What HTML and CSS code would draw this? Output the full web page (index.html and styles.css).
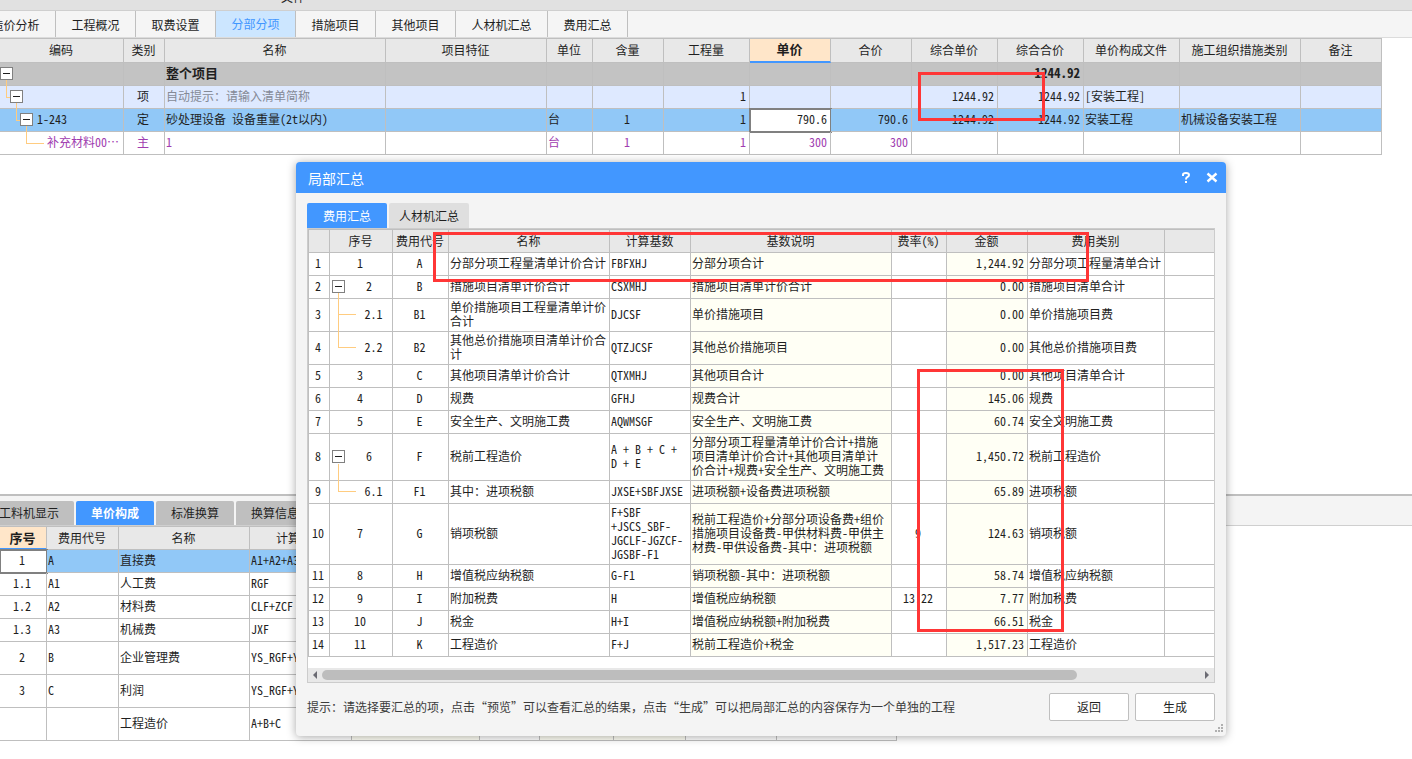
FILE: index.html
```html
<!DOCTYPE html>
<html lang="zh-CN">
<head>
<meta charset="utf-8">
<title>分部分项</title>
<link rel="stylesheet" href="styles.css">
</head>
<body>
<div class="app">
  <header class="menu-strip"><span>文件</span></header>
  <nav class="main-tabs">
    <button>造价分析</button><button>工程概况</button><button>取费设置</button><button class="active">分部分项</button><button>措施项目</button><button>其他项目</button><button class="wide">人材机汇总</button><button>费用汇总</button>
  </nav>
  <main class="upper">
    <table class="grid bill">
      <colgroup><col class="w124"><col class="w41"><col class="w221"><col class="w161"><col class="w46"><col class="w71"><col class="w86"><col class="w81"><col class="w81"><col class="w86"><col class="w86"><col class="w96"><col class="w121"><col class="w81"></colgroup>
      <thead>
        <tr><th>编码</th><th>类别</th><th>名称</th><th>项目特征</th><th>单位</th><th>含量</th><th>工程量</th><th class="current">单价</th><th>合价</th><th>综合单价</th><th>综合合价</th><th>单价构成文件</th><th>施工组织措施类别</th><th>备注</th></tr>
      </thead>
      <tbody>
        <tr class="total"><td class="tree lv0"><button class="toggle" aria-label="折叠"></button></td><td></td><td>整个项目</td><td></td><td></td><td></td><td></td><td></td><td></td><td></td><td class="r">1244.92</td><td></td><td></td><td></td></tr>
        <tr class="item"><td class="tree lv1"><button class="toggle" aria-label="折叠"></button></td><td class="c">项</td><td class="hint">自动提示：请输入清单简称</td><td></td><td></td><td></td><td class="r">1</td><td></td><td></td><td class="r">1244.92</td><td class="r">1244.92</td><td>[安装工程]</td><td></td><td></td></tr>
        <tr class="selected"><td class="tree lv2"><button class="toggle" aria-label="折叠"></button>1-243</td><td class="c">定</td><td>砂处理设备 设备重量(2t以内)</td><td></td><td>台</td><td class="c">1</td><td class="r">1</td><td class="r focus">790.6</td><td class="r">790.6</td><td class="r">1244.92</td><td class="r">1244.92</td><td>安装工程</td><td>机械设备安装工程</td><td></td></tr>
        <tr class="material"><td class="tree lv3">补充材料00…</td><td class="c">主</td><td>1</td><td></td><td>台</td><td class="c">1</td><td class="r">1</td><td class="r">300</td><td class="r">300</td><td></td><td></td><td></td><td></td><td></td></tr>
      </tbody>
    </table>
  </main>
  <section class="lower">
    <nav class="sub-tabs"><button class="wide">工料机显示</button><button class="active">单价构成</button><button>标准换算</button><button>换算信息</button></nav>
    <table class="grid price">
      <colgroup><col class="w47"><col class="w72"><col class="w131"><col class="w102"><col class="w128"><col class="w60"><col class="w74"><col class="w72"><col class="w91"><col class="w120"></colgroup>
      <thead><tr><th class="current">序号</th><th>费用代号</th><th>名称</th><th>计算基数</th><th></th><th></th><th></th><th></th><th></th><th></th></tr></thead>
      <tbody>
        <tr class="selected"><td class="c focus">1</td><td>A</td><td>直接费</td><td>A1+A2+A3</td><td></td><td></td><td></td><td></td><td></td><td></td></tr>
        <tr><td class="c">1.1</td><td>A1</td><td>人工费</td><td>RGF</td><td class="ro"></td><td></td><td class="ro"></td><td class="ro"></td><td></td><td></td></tr>
        <tr><td class="c">1.2</td><td>A2</td><td>材料费</td><td>CLF+ZCF</td><td class="ro"></td><td></td><td class="ro"></td><td class="ro"></td><td></td><td></td></tr>
        <tr><td class="c">1.3</td><td>A3</td><td>机械费</td><td>JXF</td><td class="ro"></td><td></td><td class="ro"></td><td class="ro"></td><td></td><td></td></tr>
        <tr class="tall"><td class="c">2</td><td>B</td><td>企业管理费</td><td>YS_RGF+Y</td><td class="ro"></td><td></td><td class="ro"></td><td class="ro"></td><td></td><td></td></tr>
        <tr class="tall"><td class="c">3</td><td>C</td><td>利润</td><td>YS_RGF+Y</td><td class="ro"></td><td></td><td class="ro"></td><td class="ro"></td><td></td><td></td></tr>
        <tr class="tall"><td></td><td></td><td>工程造价</td><td>A+B+C</td><td class="ro"></td><td></td><td class="ro"></td><td class="ro"></td><td></td><td></td></tr>
      </tbody>
    </table>
  </section>
</div>

<div class="dialog" role="dialog" aria-labelledby="dialog-title">
  <div class="title-bar">
    <h1 id="dialog-title">局部汇总</h1>
    <button aria-label="帮助"><svg width="12" height="12" viewBox="0 0 12 12"><path d="M3 4V2.8Q3 1 6 1Q9 1 9 3Q9 4.3 7.2 5.2Q6 5.8 6 7.4" fill="none" stroke="#fff" stroke-width="2"/><rect x="5" y="9" width="2" height="2" fill="#fff"/></svg></button>
    <button aria-label="关闭"><svg width="12" height="12" viewBox="0 0 12 12"><path d="M1.5 1.5L10.5 9.5M10.5 1.5L1.5 9.5" stroke="#fff" stroke-width="2.4"/></svg></button>
  </div>
  <div class="dialog-body">
    <nav class="dialog-tabs"><button class="active">费用汇总</button><button>人材机汇总</button></nav>
    <div class="frame">
      <table class="grid fees">
        <colgroup><col class="w22"><col class="w63"><col class="w56"><col class="w161"><col class="w81"><col class="w201"><col class="w55"><col class="w81"><col class="w137"><col></colgroup>
        <thead><tr><th></th><th>序号</th><th>费用代号</th><th>名称</th><th>计算基数</th><th>基数说明</th><th>费率(%)</th><th>金额</th><th>费用类别</th><th></th></tr></thead>
        <tbody>
          <tr><td class="c">1</td><td class="c">1</td><td class="c">A</td><td>分部分项工程量清单计价合计</td><td>FBFXHJ</td><td class="ro">分部分项合计</td><td class="c"></td><td class="r ro">1,244.92</td><td>分部分项工程量清单合计</td><td></td></tr>
          <tr><td class="c">2</td><td class="c parent"><button class="toggle" aria-label="折叠"></button>2</td><td class="c">B</td><td>措施项目清单计价合计</td><td>CSXMHJ</td><td class="ro">措施项目清单计价合计</td><td class="c"></td><td class="r ro">0.00</td><td>措施项目清单合计</td><td></td></tr>
          <tr><td class="c">3</td><td class="c child">2.1</td><td class="c">B1</td><td>单价措施项目工程量清单计价合计</td><td>DJCSF</td><td class="ro">单价措施项目</td><td class="c"></td><td class="r ro">0.00</td><td>单价措施项目费</td><td></td></tr>
          <tr><td class="c">4</td><td class="c child second">2.2</td><td class="c">B2</td><td>其他总价措施项目清单计价合计</td><td>QTZJCSF</td><td class="ro">其他总价措施项目</td><td class="c"></td><td class="r ro">0.00</td><td>其他总价措施项目费</td><td></td></tr>
          <tr><td class="c">5</td><td class="c">3</td><td class="c">C</td><td>其他项目清单计价合计</td><td>QTXMHJ</td><td class="ro">其他项目合计</td><td class="c"></td><td class="r ro">0.00</td><td>其他项目清单合计</td><td></td></tr>
          <tr><td class="c">6</td><td class="c">4</td><td class="c">D</td><td>规费</td><td>GFHJ</td><td class="ro">规费合计</td><td class="c"></td><td class="r ro">145.06</td><td>规费</td><td></td></tr>
          <tr><td class="c">7</td><td class="c">5</td><td class="c">E</td><td>安全生产、文明施工费</td><td>AQWMSGF</td><td class="ro">安全生产、文明施工费</td><td class="c"></td><td class="r ro">60.74</td><td>安全文明施工费</td><td></td></tr>
          <tr><td class="c">8</td><td class="c parent"><button class="toggle" aria-label="折叠"></button>6</td><td class="c">F</td><td>税前工程造价</td><td>A + B + C +<br>D + E</td><td class="ro">分部分项工程量清单计价合计+措施项目清单计价合计+其他项目清单计价合计+规费+安全生产、文明施工费</td><td class="c"></td><td class="r ro">1,450.72</td><td>税前工程造价</td><td></td></tr>
          <tr><td class="c">9</td><td class="c child second">6.1</td><td class="c">F1</td><td>其中：进项税额</td><td>JXSE+SBFJXSE</td><td class="ro">进项税额+设备费进项税额</td><td class="c"></td><td class="r ro">65.89</td><td>进项税额</td><td></td></tr>
          <tr><td class="c">10</td><td class="c">7</td><td class="c">G</td><td>销项税额</td><td>F+SBF<br>+JSCS_SBF-<br>JGCLF-JGZCF-<br>JGSBF-F1</td><td class="ro">税前工程造价+分部分项设备费+组价措施项目设备费-甲供材料费-甲供主材费-甲供设备费-其中：进项税额</td><td class="c">9</td><td class="r ro">124.63</td><td>销项税额</td><td></td></tr>
          <tr><td class="c">11</td><td class="c">8</td><td class="c">H</td><td>增值税应纳税额</td><td>G-F1</td><td class="ro">销项税额-其中：进项税额</td><td class="c"></td><td class="r ro">58.74</td><td>增值税应纳税额</td><td></td></tr>
          <tr><td class="c">12</td><td class="c">9</td><td class="c">I</td><td>附加税费</td><td>H</td><td class="ro">增值税应纳税额</td><td class="c">13.22</td><td class="r ro">7.77</td><td>附加税费</td><td></td></tr>
          <tr><td class="c">13</td><td class="c">10</td><td class="c">J</td><td>税金</td><td>H+I</td><td class="ro">增值税应纳税额+附加税费</td><td class="c"></td><td class="r ro">66.51</td><td>税金</td><td></td></tr>
          <tr><td class="c">14</td><td class="c">11</td><td class="c">K</td><td>工程造价</td><td>F+J</td><td class="ro">税前工程造价+税金</td><td class="c"></td><td class="r ro">1,517.23</td><td>工程造价</td><td></td></tr>
        </tbody>
      </table>
      <div class="scrollbar">
        <svg width="14" height="14" viewBox="0 0 14 14"><path d="M9 3V11L5 7Z" fill="#6b6b73"/></svg>
        <div class="track"><div class="thumb"></div></div>
        <svg width="14" height="14" viewBox="0 0 14 14"><path d="M5 3V11L9 7Z" fill="#6b6b73"/></svg>
      </div>
    </div>
    <footer class="dialog-footer">
      <p>提示：请选择要汇总的项，点击“预览”可以查看汇总的结果，点击“生成”可以把局部汇总的内容保存为一个单独的工程</p>
      <button>返回</button><button>生成</button>
    </footer>
  </div>
  <svg class="grip" width="8" height="8" viewBox="0 0 8 8"><path d="M6 0h2v2h-2zM3 3h2v2h-2zM6 3h2v2h-2zM0 6h2v2h-2zM3 6h2v2h-2zM6 6h2v2h-2z" fill="#b0b0b0"/></svg>
</div>
<div class="mark mark-price"></div>
<div class="mark mark-first"></div>
<div class="mark mark-amount"></div>
</body>
</html>
```

FILE: styles.css
```css
* { box-sizing: border-box; }

body {
  margin: 0;
  position: relative;
  overflow: hidden;
  background: #fff;
  color: #1f1f1f;
  font: 12px/14px "Noto Sans CJK SC", sans-serif;
}

button {
  margin: 0;
  padding: 0;
  border: 0;
  background: none;
  color: inherit;
  font: inherit;
}

.app {
  display: flex;
  flex-direction: column;
  min-height: 100vh;
}

/* Top strip and module tabs */
.menu-strip {
  height: 10px;
  overflow: hidden;
  background: #e1e1e1;
  padding-left: 281px;
}
.menu-strip span { display: block; margin-top: -10px; }

.main-tabs {
  display: flex;
  height: 28px;
  margin-left: -24px;
  border-top: 1px solid #cfcfcf;
  border-bottom: 1px solid #dcdcdc;
  background: #f5f5f5;
}
.main-tabs button {
  width: 80px;
  padding-top: 2px;
  border-right: 1px solid #bfbfbf;
}
.main-tabs .wide { width: 92px; }
.main-tabs .active { padding-top: 0; background: #cce6ff; color: #4297ff; }

/* Data grids */
.grid {
  table-layout: fixed;
  width: 0;
  border-spacing: 0;
  border-top: 1px solid #bfbfbf;
  font-feature-settings: "hwid";
}
.grid th, .grid td {
  position: relative;
  height: 23px;
  padding: 1px 3px 3px 1px;
  border-right: 1px solid #bfbfbf;
  border-bottom: 1px solid #bfbfbf;
  text-align: left;
  white-space: nowrap;
}
.grid th {
  padding: 0 1px 0 0;
  background: #e8e8e8;
  font-weight: 400;
  text-align: center;
}
.grid th.current {
  background: #ffe6c9;
  border-bottom: 2px solid #4297ff;
  font-size: 13px;
  font-weight: 700;
}
.grid .c { text-align: center; }
.grid .r { text-align: right; }
.grid .ro { background: #fffff5; }
.grid .tall td { height: 33px; }
.grid .selected td { background: #91c8f7; }
.grid .selected td.focus {
  background: #fff;
  outline: 2px solid #808080;
  outline-offset: -1px;
}
.grid.bill th { height: 24px; padding-bottom: 2px; }
.bill .total td { background: #c3c3c3; font-size: 13px; font-weight: 700; }
.bill .item td { background: #dee9ff; }
.bill .item .hint { color: #858a96; }
.bill .material td { color: #a03cb0; }

.w22 { width: 22px; } .w41 { width: 41px; } .w46 { width: 46px; } .w47 { width: 47px; }
.w55 { width: 55px; } .w56 { width: 56px; } .w60 { width: 60px; } .w63 { width: 63px; }
.w71 { width: 71px; } .w72 { width: 72px; } .w74 { width: 74px; } .w81 { width: 81px; }
.w86 { width: 86px; } .w91 { width: 91px; } .w96 { width: 96px; } .w102 { width: 102px; }
.w120 { width: 120px; } .w121 { width: 121px; } .w124 { width: 124px; } .w128 { width: 128px; }
.w131 { width: 131px; } .w137 { width: 137px; } .w161 { width: 161px; } .w201 { width: 201px; }
.w221 { width: 221px; }

/* Tree controls */
.toggle {
  position: absolute;
  top: calc(50% - 7px);
  left: 0;
  width: 13px;
  height: 13px;
  border: 1px solid #808080;
  background: linear-gradient(#1f1f1f, #1f1f1f) center / 7px 1px no-repeat #fff;
}
.lv1 .toggle { left: 10px; }
.lv2 .toggle { left: 20px; }
.parent .toggle { left: 2px; }
.grid .lv2 { padding-left: 37px; }
.grid .lv3 { padding-left: 47px; }
.lv1::before, .lv2::before, .lv3::before, .child::before {
  content: "";
  position: absolute;
  top: -6px;
  left: 6px;
  width: 4px;
  height: 17px;
  border-left: 1px solid #ffcc80;
  border-bottom: 1px solid #ffcc80;
}
.lv2::before { left: 16px; }
.lv3::before { left: 26px; width: 17px; }
.grid .parent { padding-left: 19px; }
.grid .child { padding-left: 28px; }
.child::before {
  bottom: 50%;
  left: 8px;
  width: 17px;
  height: auto;
}
.second::before { top: -17px; }

/* Lower pane */
.upper { flex: 1; }
.lower { flex: 0 0 265px; border-top: 2px solid #bfbfbf; }
.sub-tabs {
  display: flex;
  gap: 2px;
  height: 30px;
  padding-top: 5px;
  margin-left: -16px;
  border-bottom: 1px solid #cfcfcf;
  background: #f4f4f4;
}
.sub-tabs button {
  width: 78px;
  border-radius: 2px 2px 0 0;
  background: #bfbfbf;
}
.sub-tabs .wide { width: 90px; }
.sub-tabs .active { background: #4297ff; color: #fff; font-weight: 700; }

/* Dialog */
.dialog {
  position: absolute;
  top: 162px;
  left: 296px;
  right: 186px;
  border-radius: 4px;
  background: #f4f4f4;
  box-shadow: 0 1px 10px rgba(0, 0, 0, 0.35);
}
.title-bar {
  display: flex;
  align-items: center;
  gap: 14px;
  height: 31px;
  padding: 0 8px 0 12px;
  border-radius: 4px 4px 0 0;
  background: #4297ff;
  color: #fff;
}
.title-bar h1 { flex: 1; margin: 0; font-size: 14px; font-weight: 400; }
.title-bar button { display: flex; }
.dialog-body { padding: 10px 11px 15px; }
.dialog-tabs { display: flex; gap: 2px; }
.dialog-tabs button {
  width: 80px;
  height: 25px;
  border-radius: 2px 2px 0 0;
  background: #dfdfdf;
}
.dialog-tabs .active { background: #4297ff; color: #fff; }
.frame { border: 1px solid #ccc; background: #fff; }
.fees { width: 100%; }
.fees tr > :first-child { border-left: 1px solid #bfbfbf; }
.fees tr > :last-child { border-right: 0; }
.grid.fees td { white-space: normal; }
.scrollbar {
  display: flex;
  height: 14px;
  margin-top: 11px;
  background: #e8e8e8;
}
.track { flex: 1; padding: 2px 0; }
.thumb { width: 86%; height: 10px; border-radius: 5px; background: #bdbdbd; }
.dialog-footer {
  display: flex;
  align-items: center;
  gap: 6px;
  margin-top: 10px;
}
.dialog-footer p { flex: 1; margin: 0; color: #3c3c3c; white-space: nowrap; }
.dialog-footer button {
  width: 80px;
  height: 28px;
  border: 1px solid #bfbfbf;
  border-radius: 2px;
  background: #fff;
}
.grip { position: absolute; right: 3px; bottom: 4px; }

/* Red highlight boxes over the page */
.mark { position: absolute; border: 3px solid #ff3636; }
.mark-price { left: 918px; top: 72px; width: 127px; height: 49px; }
.mark-first { left: 433px; top: 232px; width: 656px; height: 50px; }
.mark-amount { left: 917px; top: 369px; width: 147px; height: 263px; }
```
